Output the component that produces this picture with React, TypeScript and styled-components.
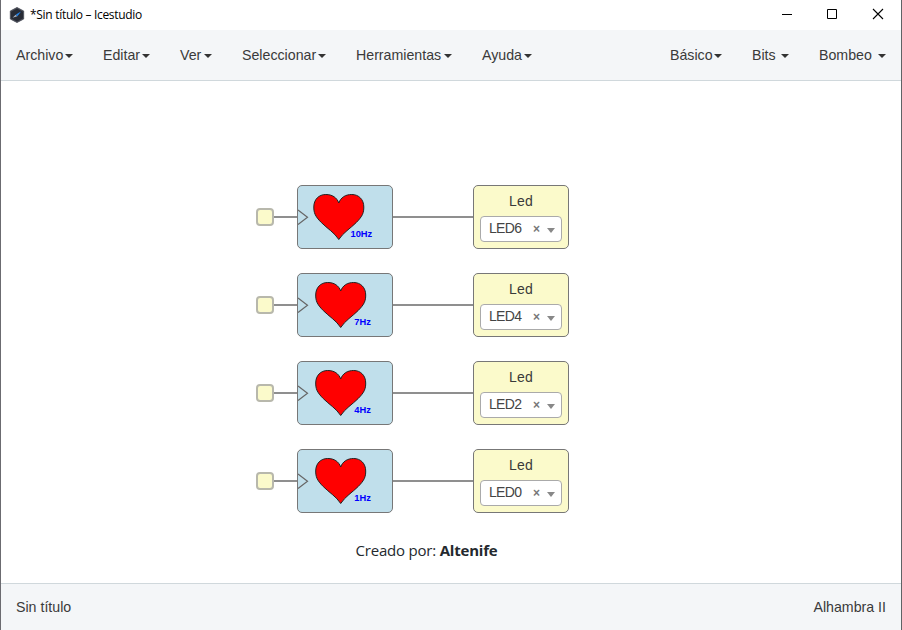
import React from 'react';
import styled, { createGlobalStyle } from 'styled-components';

const GlobalStyle = createGlobalStyle`
  * { box-sizing: border-box; }
  body { margin: 0; overflow: hidden; }
`;

const Window = styled.div`
  width: 902px;
  height: 630px;
  display: flex;
  flex-direction: column;
  background: #fff;
  border-left: 1px solid #6b6b70;
  border-right: 1px solid #5f6366;
  font-family: 'Liberation Sans', Arial, sans-serif;
  font-size: 14.2px;
  color: #3a3a3a;
`;

const TitleBar = styled.header`
  height: 30px;
  flex: none;
  display: flex;
  align-items: center;
  padding-left: 8px;
`;

const Title = styled.span`
  font-family: 'Open Sans', 'Noto Sans', sans-serif;
  font-size: 12px;
  letter-spacing: -0.3px;
  line-height: 16px;
  color: #000;
  margin-left: 5px;
  flex: 1;
  white-space: nowrap;
`;

const WindowButton = styled.span`
  width: 46px;
  height: 30px;
  display: block;
`;

const Bar = styled.nav`
  height: 51px;
  flex: none;
  display: flex;
  justify-content: space-between;
  background: #f4f6f8;
  border-bottom: 1px solid #d0d8dc;
`;

const MenuGroup = styled.div`
  display: flex;
`;

const MenuItem = styled.div<{ $width: number }>`
  width: ${(p) => p.$width + 30}px;
  padding: 0 15px;
  display: flex;
  align-items: center;
  justify-content: space-between;
  line-height: 20px;
  white-space: nowrap;
`;

const Caret = styled.i`
  border: 4px solid transparent;
  border-top-color: #333;
  border-bottom: 0;
  margin-top: 2px;
`;

const Canvas = styled.main`
  flex: 1;
  padding: 104px 0 0 255px;
`;

const Circuit = styled.div`
  display: grid;
  row-gap: 24px;
`;

const Chain = styled.div`
  display: flex;
  align-items: center;
  height: 64px;
`;

const Port = styled.span`
  width: 18px;
  height: 18px;
  border: 2px solid #b8b8ac;
  border-radius: 4px;
  background: #fbfacb;
`;

const Wire = styled.span<{ $length: number }>`
  width: ${(p) => p.$length}px;
  height: 2px;
  background: #8f8f8f;
`;

const Block = styled.div<{ $fill: string }>`
  width: 96px;
  height: 64px;
  border: 1px solid #777;
  border-radius: 5px;
  background: ${(p) => p.$fill};
`;

const LedBody = styled.div`
  display: flex;
  flex-direction: column;
  align-items: center;
  padding-top: 5px;
`;

const LedLabel = styled.span`
  font-size: 14px;
  line-height: 20px;
  letter-spacing: 0.2px;
`;

const Select = styled.div`
  width: 82px;
  height: 26px;
  margin-top: 5px;
  border: 1px solid #aaa;
  border-radius: 4px;
  background: #fff;
  display: flex;
  align-items: center;
  padding: 0 6px 2px 8px;
`;

const SelectValue = styled.span`
  flex: 1;
  font-size: 14px;
  letter-spacing: -0.7px;
  color: #444;
`;

const Clear = styled.span`
  font-size: 12px;
  font-weight: bold;
  color: #777;
  margin: 2px 7px 0 0;
`;

const SelectArrow = styled.i`
  border: 4px solid transparent;
  border-top: 5px solid #888;
  border-bottom: 0;
  margin-top: 4px;
`;

const Credit = styled.p`
  margin: 26px 0 0 99.5px;
  font-family: 'Open Sans', 'Noto Sans', sans-serif;
  font-size: 15px;
  font-weight: 380;
  line-height: 22px;
  letter-spacing: -0.2px;
  color: #24292e;
  white-space: nowrap;
`;

const Footer = styled.footer`
  height: 47px;
  flex: none;
  display: flex;
  justify-content: space-between;
  align-items: center;
  padding: 0 15px;
  background: #f4f6f8;
  border-top: 1px solid #d0d8dc;
`;

const AppIcon = () => (
  <svg width="16" height="16" viewBox="0 0 16 16">
    <path d="M8 .5 14.7 4v8L8 15.5 1.3 12V4Z" fill="#272b35" stroke="#4b4f59" strokeWidth=".8" />
    <path d="M2 4.3 8 1l6 3.3M2 11.8l6 3.2 6-3.2" fill="none" stroke="#555862" strokeWidth=".7" />
    <path d="m3.5 10.8 3.2-3 1.7 1.5Z" fill="#a9b3c3" />
    <path d="m7 7.5 5-3-3.6 4.7Z" fill="#2386ec" />
  </svg>
);

const Heart = ({ label, shift, labelX }: { label: string; shift: number; labelX: number }) => (
  <svg width="94" height="62" viewBox="0 0 94 62" display="block">
    <path d="M0 24 9.5 31.2 0 38.5" fill="none" stroke="#666" strokeWidth="1.2" />
    <path
      transform={`translate(${shift} 0)`}
      d="M42.5 53.5C38 46.5 31 42.5 25 36.5 18.5 30 17.5 26.5 17.5 21 17.5 13.5 22.5 8.5 29.5 8.5 36 8.5 40.5 11.5 42.5 17 44.5 11.5 49 8.5 55.5 8.5 62.5 8.5 67.5 13.5 67.5 21 67.5 26.5 66.5 30 60 36.5 54 42.5 47 46.5 42.5 53.5Z"
      fill="#f00"
      stroke="#222"
      strokeWidth="1"
    />
    <text x={labelX} y="51" fill="#00f" fontSize="9.3" fontWeight="bold" fontFamily="Liberation Sans, Arial, sans-serif">
      {label}
    </text>
  </svg>
);

const leftMenus = [
  { text: 'Archivo', width: 57 },
  { text: 'Editar', width: 47 },
  { text: 'Ver', width: 32 },
  { text: 'Seleccionar', width: 84 },
  { text: 'Herramientas', width: 96 },
  { text: 'Ayuda', width: 50 },
];

const rightMenus = [
  { text: 'Básico', width: 52 },
  { text: 'Bits', width: 37 },
  { text: 'Bombeo', width: 67 },
];

const chains = [
  { rate: '10Hz', led: 'LED6', shift: -1.7, labelX: 52.5 },
  { rate: '7Hz', led: 'LED4', shift: 0.2, labelX: 56.3 },
  { rate: '4Hz', led: 'LED2', shift: 0.2, labelX: 56.3 },
  { rate: '1Hz', led: 'LED0', shift: 0.2, labelX: 56.3 },
];

const Menus = ({ items }: { items: typeof leftMenus }) => (
  <MenuGroup>
    {items.map((item) => (
      <MenuItem key={item.text} $width={item.width}>
        {item.text}
        <Caret />
      </MenuItem>
    ))}
  </MenuGroup>
);

export default function App() {
  return (
    <>
      <GlobalStyle />
      <Window>
        <TitleBar>
          <AppIcon />
          <Title>*Sin título – Icestudio</Title>
          <WindowButton>
            <svg width="46" height="30"><path d="M19 14.5h10" stroke="#000" /></svg>
          </WindowButton>
          <WindowButton>
            <svg width="46" height="30"><path d="M18.5 9.5h9v9h-9Z" fill="none" stroke="#000" /></svg>
          </WindowButton>
          <WindowButton>
            <svg width="46" height="30"><path d="m18 9 10 10M28 9 18 19" stroke="#000" strokeWidth="1.1" /></svg>
          </WindowButton>
        </TitleBar>
        <Bar>
          <Menus items={leftMenus} />
          <Menus items={rightMenus} />
        </Bar>
        <Canvas>
          <Circuit>
            {chains.map((c) => (
              <Chain key={c.led}>
                <Port />
                <Wire $length={23} />
                <Block $fill="#c0dfeb">
                  <Heart label={c.rate} shift={c.shift} labelX={c.labelX} />
                </Block>
                <Wire $length={80} />
                <Block $fill="#fbfacb">
                  <LedBody>
                    <LedLabel>Led</LedLabel>
                    <Select>
                      <SelectValue>{c.led}</SelectValue>
                      <Clear>×</Clear>
                      <SelectArrow />
                    </Select>
                  </LedBody>
                </Block>
              </Chain>
            ))}
          </Circuit>
          <Credit>
            Creado por: <b>Altenife</b>
          </Credit>
        </Canvas>
        <Footer>
          <span>Sin título</span>
          <span>Alhambra II</span>
        </Footer>
      </Window>
    </>
  );
}
